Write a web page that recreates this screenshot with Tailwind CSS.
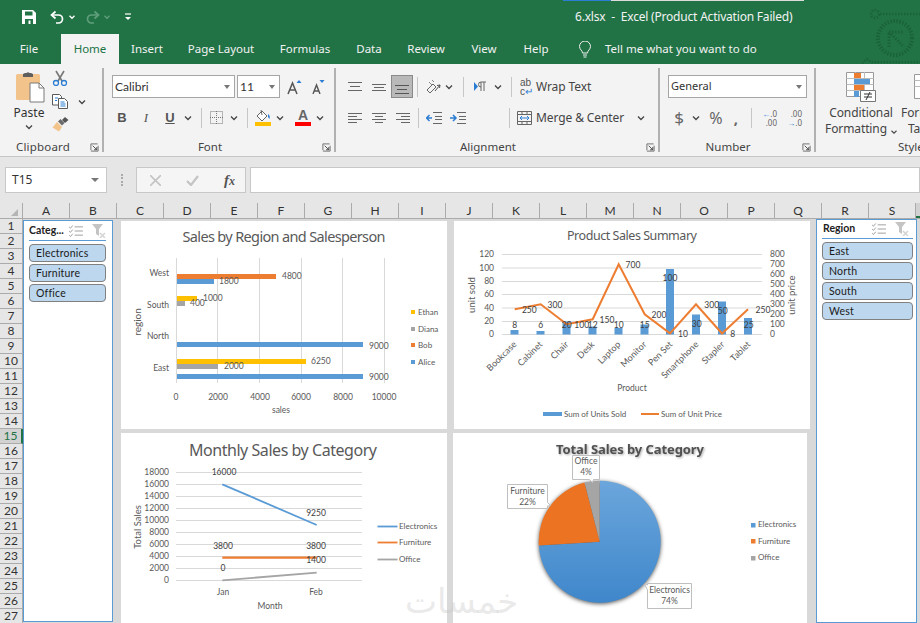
<!DOCTYPE html>
<html lang="en">
<head>
<meta charset="UTF-8">
<title>6.xlsx - Excel</title>
<script src="https://cdn.jsdelivr.net/npm/@tailwindcss/browser@4"></script>
</head>
<body class="bg-[#d9d9d9]">
<svg class="hidden">
  <symbol id="chev" viewBox="0 0 12 12"><path d="M3 4.500l3 3 3-3" fill="none" stroke="#444" stroke-width="1.300"/></symbol>
  <symbol id="launch" viewBox="0 0 10 10"><path d="M1 8V1h7.500M1 9h8V3" fill="none" stroke="#666"/><path d="M3 3l4.500 4.500M7.500 4.500v3h-3" fill="none" stroke="#444"/></symbol>
  <symbol id="multi" viewBox="0 0 15 13"><path d="M6 2h9M6 6.500h9M6 11h9" stroke="#999" fill="none"/><path d="M0 2l1.500 1.500L4 .5M0 6.500L1.500 8 4 5M0 11l1.500 1.500L4 9.500" stroke="#999" fill="none"/></symbol>
  <symbol id="clear" viewBox="0 0 14 14"><path d="M0 0h11L7 5v7l-3-2V5z" fill="#c4c4c4"/><path d="M8 9l5 5M13 9l-5 5" stroke="#d4d4d4" stroke-width="1.500"/></symbol>
</svg>

<div class="relative w-[920px] h-[623px] overflow-hidden flex flex-col font-['Noto_Sans',sans-serif]">

  <!-- title bar -->
  <div class="relative h-[34px] bg-[#217346] flex items-center text-white shrink-0">
    <div class="absolute top-0 left-[563px] w-[48px] h-px bg-[#2b7cd3]"></div>
    <div class="absolute top-0 left-[611px] w-[193px] h-px bg-[#dcdcdc]"></div>
    <svg class="ml-[22px] w-[14px] h-[14px]" viewBox="0 0 14 14"><path d="M0 0h11l3 3v11H0z" fill="#fff"/><path d="M3 1.500h7.500v4H3z" fill="#217346"/><path d="M3 9h8v5H3z" fill="#217346"/><path d="M6.500 10.500h2V14h-2z" fill="#fff"/></svg>
    <svg class="ml-[14px] w-[14px] h-[14px]" viewBox="0 0 14 14"><path d="M5.500 1.500L1.500 5l4 3.500" fill="none" stroke="#fff" stroke-width="1.700"/><path d="M2 5h6.500a4 4 0 0 1 0 8H6" fill="none" stroke="#fff" stroke-width="1.700"/></svg>
    <svg class="ml-[3px] w-[10px] h-[10px]" viewBox="0 0 12 12"><path d="M3 4.500l3 3 3-3" fill="none" stroke="#fff" stroke-width="1.500"/></svg>
    <svg class="ml-[9px] w-[14px] h-[14px] opacity-40" viewBox="0 0 14 14"><path d="M8.500 1.500l4 3.500-4 3.500" fill="none" stroke="#bfe0cc" stroke-width="1.700"/><path d="M12 5H5.500a4 4 0 0 0 0 8H8" fill="none" stroke="#bfe0cc" stroke-width="1.700"/></svg>
    <svg class="ml-[2px] w-[10px] h-[10px] opacity-40" viewBox="0 0 12 12"><path d="M3 4.500l3 3 3-3" fill="none" stroke="#bfe0cc" stroke-width="1.500"/></svg>
    <svg class="ml-[12px] w-[8px] h-[8px]" viewBox="0 0 8 8"><path d="M1 1h6" stroke="#fff" stroke-width="1.200"/><path d="M1 4h6L4 7z" fill="#fff"/></svg>
    <span class="absolute left-[575px] top-[8px] text-[12px] leading-[18px] tracking-[-0.2px] whitespace-pre text-[#f2f2f2]">6.xlsx  -  Excel (Product Activation Failed)</span>
    <svg class="absolute left-[862px] top-0 w-[58px] h-[64px]" viewBox="862 0 58 64" fill="none" stroke="#1a6239" stroke-width="2.500" stroke-dasharray="1.500 1.500">
      <circle cx="875" cy="14" r="4"/><path d="M880 14h40"/>
      <circle cx="895" cy="38" r="17" stroke-width="4"/>
      <path d="M889 47V32h14M889 32l15 15" stroke-width="3"/>
      <path d="M862 63l5-4 4 3h49"/>
    </svg>
  </div>

  <!-- tabs -->
  <div class="h-[30px] bg-[#217346] flex items-center text-[11.500px] text-[#f2f2f2] shrink-0">
    <div class="w-[58px] text-center">File</div>
    <div class="ml-[3px] w-[58px] h-full bg-[#f3f3f3] text-[#217346] flex items-center justify-center">Home</div>
    <div class="w-[56px] text-center">Insert</div>
    <div class="w-[92px] text-center">Page Layout</div>
    <div class="w-[76px] text-center">Formulas</div>
    <div class="w-[52px] text-center">Data</div>
    <div class="w-[62px] text-center">Review</div>
    <div class="w-[54px] text-center">View</div>
    <div class="w-[50px] text-center">Help</div>
    <svg class="ml-[17px] w-[14px] h-[17px]" viewBox="0 0 14 17" fill="none" stroke="#f2f2f2"><path d="M4.500 12c0-2.500-3-3.500-3-6.500a5.500 5.500 0 0 1 11 0c0 3-3 4-3 6.500z"/><path d="M5 14h4M5.500 16h3"/></svg>
    <span class="ml-[13px]">Tell me what you want to do</span>
  </div>

  <!-- ribbon -->
  <div class="h-[93px] bg-[#f3f3f3] border-b border-[#c6c6c6] flex text-[11.500px] text-[#444] shrink-0 overflow-hidden">

    <!-- Clipboard -->
    <div class="relative w-[104px] h-[84px] mt-[4px] border-r-2 border-[#b1b1b1] flex flex-col shrink-0">
      <div class="flex flex-1">
        <div class="w-[52px] flex flex-col items-center pt-[3px] pl-[8px]">
          <svg class="w-[30px] h-[32px]" viewBox="0 0 30 32"><rect x="1" y="3" width="24" height="26" rx="1.500" fill="#f2c38a"/><path d="M8 3l2-1h1.500a2 2 0 0 1 3 0H16l2 1v3H8z" fill="#5f5f5f"/><path d="M15 12h9l5 5v14H15z" fill="#fff" stroke="#7a7a7a"/><path d="M24 12v5h5" fill="none" stroke="#7a7a7a"/></svg>
          <span class="text-[12px] leading-[16px] text-[#333] mt-[2px] -ml-[2px]">Paste</span>
          <svg class="w-[12px] h-[12px] -ml-[2px]"><use href="#chev"/></svg>
        </div>
        <div class="flex flex-col pt-[2px] gap-[8px]">
          <svg class="w-[16px] h-[16px]" viewBox="0 0 16 16" fill="none"><path d="M4 1l6 10M12 1L6 11" stroke="#777" stroke-width="1.600"/><circle cx="4" cy="13" r="2.500" stroke="#2b7cd3" stroke-width="1.300"/><circle cx="12" cy="13" r="2.500" stroke="#2b7cd3" stroke-width="1.300"/></svg>
          <div class="flex items-center">
            <svg class="w-[16px] h-[15px]" viewBox="0 0 16 15" fill="#fff" stroke="#5a5a5a"><path d="M.5.500h7l2 2V11H.5z"/><path d="M6.500 4.500h6l3 3v7h-9z"/><path d="M3 4h3M3 6.500h2M8.500 8h4M8.500 10h5M8.500 12h5" stroke="#2b7cd3"/></svg>
            <svg class="ml-[8px] w-[12px] h-[12px]"><use href="#chev"/></svg>
          </div>
          <svg class="w-[17px] h-[15px]" viewBox="0 0 17 15"><path d="M5 5l5 5-3 4.500-6.500-4z" fill="#f2c38a"/><path d="M6 4.500l4 4 2.500-2.500-4-4z" fill="#6a6a6a"/><path d="M10 3l3-3 3.500 3-3.500 3z" fill="#555"/></svg>
        </div>
      </div>
      <div class="h-[16px] w-[86px] text-center leading-[22px] tracking-[0.2px]">Clipboard</div>
      <svg class="absolute right-[3px] bottom-0 w-[9px] h-[9px]"><use href="#launch"/></svg>
    </div>

    <!-- Font -->
    <div class="relative w-[232px] h-[84px] mt-[4px] border-r-2 border-[#b1b1b1] flex flex-col shrink-0">
      <div class="flex items-center mt-[7px] ml-[8px]">
        <div class="w-[123px] h-[23px] bg-white border border-[#a6a6a6] flex items-center pl-[2px] text-[12px] text-[#333] font-['Lato',sans-serif]">Calibri<span class="ml-auto mr-[4px] border-x-[3.500px] border-t-[4px] border-x-transparent border-t-[#777]"></span></div>
        <div class="ml-[2px] w-[43px] h-[23px] bg-white border border-[#a6a6a6] flex items-center pl-[2px] text-[12px] text-[#333] font-['Lato',sans-serif]">11<span class="ml-auto mr-[4px] border-x-[3.500px] border-t-[4px] border-x-transparent border-t-[#777]"></span></div>
        <svg class="ml-[7px] w-[15px] h-[16px]" viewBox="0 0 15 16"><path d="M1 15L5.500 4 10 15M2.800 11h5.400" fill="none" stroke="#555" stroke-width="1.500"/><path d="M9.500 4L12 1l2.500 3z" fill="#2b7cd3"/></svg>
        <svg class="ml-[10px] w-[13px] h-[15px]" viewBox="0 0 13 15"><path d="M1 15L4.500 6 8 15M2.300 12h4.400" fill="none" stroke="#555" stroke-width="1.400"/><path d="M7.500 1L10 4l2.500-3z" fill="#2b7cd3"/></svg>
      </div>
      <div class="flex items-center mt-[7px] ml-[6px] h-[25px] text-[13px] text-[#555]">
        <span class="w-[24px] text-center font-bold font-['Liberation_Sans',sans-serif]">B</span>
        <span class="w-[24px] text-center italic font-['Liberation_Serif',serif]">I</span>
        <span class="w-[24px] text-center font-bold underline font-['Liberation_Sans',sans-serif]">U</span>
        <svg class="w-[12px] h-[12px]"><use href="#chev"/></svg>
        <span class="ml-[7px] w-px h-[20px] bg-[#c6c6c6]"></span>
        <svg class="ml-[8px] w-[13px] h-[13px]" viewBox="0 0 13 13" fill="none" stroke="#777" stroke-dasharray="1 1"><path d="M.5.500h12v12H.5zM6.500 0v13M0 6.500h13"/></svg>
        <svg class="ml-[5px] w-[12px] h-[12px]"><use href="#chev"/></svg>
        <span class="ml-[7px] w-px h-[20px] bg-[#c6c6c6]"></span>
        <div class="ml-[7px] flex flex-col items-center w-[16px]">
          <svg class="w-[16px] h-[13px]" viewBox="0 0 16 13"><path d="M2 7l5-5 5 5-5 5z" fill="#fff" stroke="#666"/><path d="M6 1l1 5" stroke="#666"/><path d="M13 5c2 1 2 3 1.500 5l-1.500-2z" fill="#2b7cd3"/></svg>
          <span class="w-[16px] h-[4px] bg-[#ffc000]"></span>
        </div>
        <svg class="ml-[3px] w-[12px] h-[12px]"><use href="#chev"/></svg>
        <div class="ml-[9px] flex flex-col items-center w-[16px]">
          <span class="text-[14px] leading-[13px] text-[#666] font-bold font-['Liberation_Sans',sans-serif]">A</span>
          <span class="w-[16px] h-[4px] bg-[#ff0000]"></span>
        </div>
        <svg class="ml-[3px] w-[12px] h-[12px]"><use href="#chev"/></svg>
      </div>
      <div class="mt-auto h-[16px] text-center leading-[22px] pr-[18px]">Font</div>
      <svg class="absolute right-[3px] bottom-0 w-[9px] h-[9px]"><use href="#launch"/></svg>
    </div>

    <!-- Alignment -->
    <div class="relative w-[324px] h-[84px] mt-[4px] border-r-2 border-[#b1b1b1] flex flex-col shrink-0">
      <div class="flex items-center mt-[7px] h-[23px]">
        <svg class="ml-[12px] w-[14px] h-[10px]" viewBox="0 0 14 10" stroke="#666"><path d="M0 .500h14M2 4.500h10M0 8.500h14"/></svg>
        <svg class="ml-[10px] w-[14px] h-[10px]" viewBox="0 0 14 10" stroke="#666"><path d="M0 2.500h14M2 5.500h10M0 8.500h14"/></svg>
        <div class="ml-[5px] w-[22px] h-[23px] bg-[#b9b9b9] border border-[#8a8a8a] flex items-end justify-center pb-[3px]">
          <svg class="w-[14px] h-[9px]" viewBox="0 0 14 9" stroke="#555"><path d="M0 .500h14M2 4.500h10M0 8.500h14"/></svg>
        </div>
        <span class="ml-[4px] w-px h-[20px] bg-[#c6c6c6]"></span>
        <svg class="ml-[8px] w-[16px] h-[15px]" viewBox="0 0 16 15" fill="none" stroke="#666"><path d="M1 11l6-6 3 3-6 6z"/><path d="M9 12l5-6M14 6l-3 .500M14 6l-.500 3" stroke="#555"/><path d="M3 3l3 3M6 1l2 2" stroke="#888"/></svg>
        <svg class="ml-[1px] w-[12px] h-[12px]"><use href="#chev"/></svg>
        <span class="ml-[8px] w-px h-[20px] bg-[#c6c6c6]"></span>
        <svg class="ml-[10px] w-[13px] h-[11px]" viewBox="0 0 13 11"><path d="M0 1l4 4.500L0 10z" fill="#2b7cd3"/><path d="M7 10V1h5M10 1v9M7 1a2.500 2.500 0 0 0 0 5" fill="none" stroke="#666"/></svg>
        <svg class="ml-[5px] w-[12px] h-[12px]"><use href="#chev"/></svg>
        <span class="ml-[7px] w-px h-[20px] bg-[#c6c6c6]"></span>
        <span class="ml-[8px] w-[13px] text-[10px] leading-[9px] text-[#555] font-['Liberation_Sans',sans-serif]">ab<br>c<span class="text-[#2b7cd3]">↵</span></span>
        <span class="ml-[3px] text-[12px] tracking-[-0.1px]">Wrap Text</span>
      </div>
      <div class="flex items-center mt-[7px] h-[25px]">
        <svg class="ml-[12px] w-[14px] h-[10px]" viewBox="0 0 14 10" stroke="#666"><path d="M0 .500h14M0 3.500h9M0 6.500h14M0 9.500h9"/></svg>
        <svg class="ml-[10px] w-[14px] h-[10px]" viewBox="0 0 14 10" stroke="#666"><path d="M0 .500h14M3 3.500h8M0 6.500h14M3 9.500h8"/></svg>
        <svg class="ml-[10px] w-[14px] h-[10px]" viewBox="0 0 14 10" stroke="#666"><path d="M0 .500h14M5 3.500h9M0 6.500h14M5 9.500h9"/></svg>
        <span class="ml-[8px] w-px h-[20px] bg-[#c6c6c6]"></span>
        <svg class="ml-[7px] w-[16px] h-[12px]" viewBox="0 0 16 12" fill="none"><path d="M7 .500h9M9 4.500h7M9 7.500h7M7 11.500h9" stroke="#666"/><path d="M6 6H1M3.500 3L.500 6l3 3" stroke="#2b7cd3" stroke-width="1.500"/></svg>
        <svg class="ml-[8px] w-[16px] h-[12px]" viewBox="0 0 16 12" fill="none"><path d="M7 .500h9M9 4.500h7M9 7.500h7M7 11.500h9" stroke="#666"/><path d="M0 6h5M3 3l3 3-3 3" stroke="#2b7cd3" stroke-width="1.500"/></svg>
        <span class="ml-[43px] w-px h-[20px] bg-[#c6c6c6]"></span>
        <svg class="ml-[7px] w-[15px] h-[14px]" viewBox="0 0 15 14" fill="none"><path d="M.5.500h14v13H.5zM.5 3.500h14M.5 10.500h14M5 .500v3M10 .500v3M5 10.500v3M10 10.500v3" stroke="#666"/><path d="M3 7h9M5 5L3 7l2 2M10 5l2 2-2 2" stroke="#2b7cd3"/></svg>
        <span class="ml-[4px] text-[12px] tracking-[-0.1px]">Merge &amp; Center</span>
        <svg class="ml-[11px] w-[12px] h-[12px]"><use href="#chev"/></svg>
      </div>
      <div class="mt-auto h-[16px] text-center leading-[22px] pr-[18px]">Alignment</div>
      <svg class="absolute right-[3px] bottom-0 w-[9px] h-[9px]"><use href="#launch"/></svg>
    </div>

    <!-- Number -->
    <div class="relative w-[156px] h-[84px] mt-[4px] border-r-2 border-[#b1b1b1] flex flex-col shrink-0">
      <div class="mt-[7px] ml-[8px] w-[139px] h-[23px] bg-white border border-[#a6a6a6] flex items-center pl-[2px] text-[11px] text-[#333]">General<span class="ml-auto mr-[4px] border-x-[3.500px] border-t-[4px] border-x-transparent border-t-[#777]"></span></div>
      <div class="flex items-center mt-[7px] h-[25px] text-[#666]">
        <span class="ml-[13px] w-[12px] text-center text-[17px]">$</span>
        <svg class="ml-[5px] w-[12px] h-[12px]"><use href="#chev"/></svg>
        <span class="ml-[6px] w-[16px] text-center text-[16px]">%</span>
        <span class="ml-[6px] w-[12px] text-center text-[15px] font-bold leading-[14px]">,</span>
        <span class="ml-[9px] w-px h-[20px] bg-[#c6c6c6]"></span>
        <div class="ml-[9px] w-[16px] text-[8px] leading-[9px] flex flex-col items-end"><span><span class="text-[#2b7cd3]">←</span>.0</span><span>.00</span></div>
        <div class="ml-[9px] w-[16px] text-[8px] leading-[9px] flex flex-col items-end"><span>.00</span><span><span class="text-[#2b7cd3]">→</span>.0</span></div>
      </div>
      <div class="mt-auto h-[16px] text-center leading-[22px] pr-[18px]">Number</div>
      <svg class="absolute right-[3px] bottom-0 w-[9px] h-[9px]"><use href="#launch"/></svg>
    </div>

    <!-- Styles, cut off by the window -->
    <div class="relative w-[200px] h-[84px] mt-[4px] flex shrink-0">
      <div class="w-[90px] flex flex-col items-center pt-[4px]">
        <svg class="w-[30px] h-[30px]" viewBox="0 0 30 30"><path d="M.5.500h27v24H.5z" fill="#fff" stroke="#999"/><path d="M.5 6.500h27M.5 12.500h27M.5 18.500h27M9.500 0v25M18.500 0v25" stroke="#bbb"/><path d="M8 1h7v5H8zM8 13h10v5H8z" fill="#ed7d31"/><path d="M8 7h16v5H8zM8 19h5v6H8z" fill="#5b9bd5"/><path d="M14.500 18.500h15v11h-15z" fill="#fff" stroke="#777"/><path d="M18 22h8M18 25h8M24 20l-4 8" stroke="#333" fill="none"/></svg>
        <span class="mt-[3px] text-[12px] leading-[16px] tracking-[-0.1px]">Conditional</span>
        <span class="text-[12px] leading-[16px] tracking-[-0.1px] whitespace-nowrap">Formatting <span class="inline-block w-[7px] h-[6px] align-middle"><svg class="w-[10px] h-[10px] -ml-[1px]"><use href="#chev"/></svg></span></span>
      </div>
      <div class="flex flex-col items-start pt-[4px] -ml-[5px]">
        <svg class="ml-[13px] w-[30px] h-[30px]" viewBox="0 0 30 30"><path d="M.5 2.500h27v24H.5z" fill="#fff" stroke="#999"/><path d="M.5 8.500h27M.5 14.500h27" stroke="#bbb"/></svg>
        <span class="mt-[3px] text-[12px] leading-[16px] tracking-[-0.1px]">Format as</span>
        <span class="ml-[7px] text-[12px] leading-[16px] tracking-[-0.1px]">Table</span>
      </div>
      <div class="absolute left-[82px] bottom-0 h-[16px] leading-[22px]">Styles</div>
    </div>
  </div>

  <!-- formula bar -->
  <div class="h-[46px] bg-[#e6e6e6] flex items-start pt-[10px] shrink-0">
    <div class="ml-[5px] w-[102px] h-[26px] bg-white border border-[#c8c8c8] flex items-center pl-[6px] text-[12px] text-[#333]">T15<span class="ml-auto mr-[7px] border-x-[4px] border-t-[4px] border-x-transparent border-t-[#777]"></span></div>
    <div class="ml-[14px] w-[3px] h-[12px] mt-[7px] border-l-2 border-dotted border-[#aaa]"></div>
    <div class="ml-[12px] w-[110px] h-[26px] bg-[#f5f5f5] border border-[#c8c8c8] flex items-center">
      <svg class="ml-[13px] w-[11px] h-[11px]" viewBox="0 0 11 11" stroke="#c4c4c4" stroke-width="1.600"><path d="M0 0l11 11M11 0L0 11"/></svg>
      <svg class="ml-[25px] w-[13px] h-[11px]" viewBox="0 0 13 11" fill="none" stroke="#c4c4c4" stroke-width="2.200"><path d="M1 6l4 4 7-9"/></svg>
      <span class="ml-[25px] text-[15px] italic text-[#555] font-['Liberation_Serif',serif] font-bold">f<span class="text-[12px]">x</span></span>
    </div>
    <div class="ml-[4px] flex-1 h-[26px] bg-white border border-[#c8c8c8]"></div>
  </div>

  <!-- column headers -->
  <div id="cols" class="h-[16px] flex bg-[#e6e6e6] border-b border-[#ababab] text-[12px] text-[#333] shrink-0 font-['Lato',sans-serif]">
    <div class="w-[23px] relative border-r border-[#ababab] shrink-0"><span class="absolute right-[4px] bottom-[2px] border-l-[7px] border-b-[7px] border-l-transparent border-b-[#b5b5b5]"></span></div>
  </div>

  <div class="flex flex-1 min-h-0">
    <div id="rows" class="w-[23px] shrink-0 bg-[#e6e6e6] text-[12px] text-[#333] font-['Lato',sans-serif] overflow-hidden"></div>

    <div class="relative flex-1 bg-[#d9d9d9]">

      <!-- Category slicer -->
      <div class="absolute left-0 top-[1px] bottom-[1px] w-[90px] bg-white border border-[#5b9bd5] pl-[5px] pr-[6px] font-['Lato',sans-serif]">
        <div class="flex items-center h-[20px] border-b border-[#5b9bd5] mb-[3px] text-[10.500px] font-bold text-[#222]">
          Categ...
          <svg class="ml-auto w-[14px] h-[12px]"><use href="#multi"/></svg>
          <svg class="ml-[9px] w-[14px] h-[14px]"><use href="#clear"/></svg>
        </div>
        <div class="flex flex-col gap-[2px] text-[10.500px] text-[#1a1a1a]">
          <div class="h-[18px] bg-[#bdd7ee] border border-[#808080] rounded-[4px] pl-[6px] leading-[16px] tracking-[0.2px]">Electronics</div>
          <div class="h-[18px] bg-[#bdd7ee] border border-[#808080] rounded-[4px] pl-[6px] leading-[16px] tracking-[0.2px]">Furniture</div>
          <div class="h-[18px] bg-[#bdd7ee] border border-[#808080] rounded-[4px] pl-[6px] leading-[16px] tracking-[0.2px]">Office</div>
        </div>
      </div>

      <!-- Region slicer -->
      <div class="absolute left-[793px] top-[0px] bottom-0 w-[101px] bg-white border border-[#5b9bd5] pl-[5px] pr-[3px] font-['Lato',sans-serif]">
        <div class="flex items-center h-[19px] border-b border-[#5b9bd5] mb-[3px] text-[10.500px] font-bold text-[#222]">
          <span class="ml-[1px]">Region</span>
          <svg class="ml-auto w-[14px] h-[12px]"><use href="#multi"/></svg>
          <svg class="ml-[9px] mr-[4px] w-[14px] h-[14px]"><use href="#clear"/></svg>
        </div>
        <div class="flex flex-col gap-[2px] text-[10.500px] text-[#1a1a1a]">
          <div class="h-[18px] bg-[#bdd7ee] border border-[#808080] rounded-[4px] pl-[6px] leading-[16px] tracking-[0.2px]">East</div>
          <div class="h-[18px] bg-[#bdd7ee] border border-[#808080] rounded-[4px] pl-[6px] leading-[16px] tracking-[0.2px]">North</div>
          <div class="h-[18px] bg-[#bdd7ee] border border-[#808080] rounded-[4px] pl-[6px] leading-[16px] tracking-[0.2px]">South</div>
          <div class="h-[18px] bg-[#bdd7ee] border border-[#808080] rounded-[4px] pl-[6px] leading-[16px] tracking-[0.2px]">West</div>
        </div>
      </div>

      <!-- Sales by Region and Salesperson -->
      <svg class="absolute left-[98px] top-[2px] bg-white font-['Lato',sans-serif]" width="326" height="208" viewBox="121 221 326 208" font-size="8.500" fill="#595959">
        <text x="284" y="242" text-anchor="middle" font-size="14.500" class="font-['Noto_Sans',sans-serif]" textLength="203">Sales by Region and Salesperson</text>
        <g stroke="#d9d9d9"><path d="M176.500 258v125M217.500 258v125M259.500 258v125M301.500 258v125M342.500 258v125M384.500 258v125"/></g>
        <rect x="177" y="274" width="99" height="5" fill="#ed7d31"/><rect x="177" y="279" width="37" height="5" fill="#5b9bd5"/>
        <rect x="177" y="296" width="20" height="5" fill="#ffc000"/><rect x="177" y="301" width="8" height="5" fill="#a5a5a5"/>
        <rect x="177" y="342" width="186" height="5" fill="#5b9bd5"/>
        <rect x="177" y="359" width="129" height="5" fill="#ffc000"/><rect x="177" y="364" width="41" height="5" fill="#a5a5a5"/><rect x="177" y="374" width="186" height="5" fill="#5b9bd5"/>
        <text x="282" y="279">4800</text><text x="219" y="284">1800</text><text x="203" y="301">1000</text><text x="190" y="306">400</text>
        <text x="369" y="349">9000</text><text x="311" y="364">6250</text><text x="224" y="369">2000</text><text x="369" y="380">9000</text>
        <g text-anchor="end"><text x="169" y="276">West</text><text x="169" y="308">South</text><text x="169" y="339">North</text><text x="169" y="371">East</text></g>
        <g text-anchor="middle"><text x="176" y="400">0</text><text x="218" y="400">2000</text><text x="260" y="400">4000</text><text x="301" y="400">6000</text><text x="343" y="400">8000</text><text x="384" y="400">10000</text><text x="281" y="413">sales</text>
          <text transform="translate(141 322) rotate(-90)" font-size="10">region</text></g>
        <rect x="411" y="310" width="4" height="4" fill="#ffc000"/><rect x="411" y="327" width="4" height="4" fill="#a5a5a5"/><rect x="411" y="343" width="4" height="4" fill="#ed7d31"/><rect x="411" y="360" width="4" height="4" fill="#5b9bd5"/>
        <g font-size="8"><text x="418" y="315">Ethan</text><text x="418" y="332">Diana</text><text x="418" y="348">Bob</text><text x="418" y="365">Alice</text></g>
      </svg>

      <!-- Product Sales Summary -->
      <svg class="absolute left-[431px] top-[2px] bg-white font-['Lato',sans-serif]" width="356" height="208" viewBox="454 221 356 208" font-size="8.500" fill="#595959">
        <text x="632" y="240" text-anchor="middle" font-size="12.500" class="font-['Noto_Sans',sans-serif]" textLength="130">Product Sales Summary</text>
        <g stroke="#d9d9d9"><path d="M502 254.500h260M502 268h260M502 281.500h260M502 294.500h260M502 308h260M502 321.500h260M502 334.500h260"/></g>
        <g text-anchor="end"><text x="494" y="257">120</text><text x="494" y="271">100</text><text x="494" y="284">80</text><text x="494" y="297">60</text><text x="494" y="311">40</text><text x="494" y="324">20</text><text x="494" y="337">0</text></g>
        <g><text x="770" y="257">800</text><text x="770" y="267">700</text><text x="770" y="277">600</text><text x="770" y="287">500</text><text x="770" y="297">400</text><text x="770" y="307">300</text><text x="770" y="317">200</text><text x="770" y="327">100</text><text x="770" y="337">0</text></g>
        <g fill="#5b9bd5">
          <rect x="510.500" y="330" width="8" height="4.500"/><rect x="536.500" y="331" width="8" height="3.500"/><rect x="562.500" y="321.500" width="8" height="13"/><rect x="588.500" y="326.500" width="8" height="8"/><rect x="614.500" y="328" width="8" height="6.500"/><rect x="640.500" y="324.500" width="8" height="10"/><rect x="666" y="269" width="8" height="65.500"/><rect x="692" y="314.500" width="8" height="20"/><rect x="718" y="301.500" width="8" height="33"/><rect x="744" y="318" width="8" height="16.500"/>
        </g>
        <polyline points="514.700,309.300 540.700,304.300 566.700,324.300 592.700,319.300 618.700,264.300 644.700,314.300 670,333.300 696,304.300 722,333.500 748,309.300" fill="none" stroke="#ed7d31" stroke-width="2"/>
        <g text-anchor="middle" fill="#404040">
          <text x="514.700" y="328">8</text><text x="540.700" y="328">6</text><text x="566.700" y="328">20</text><text x="592.700" y="328">12</text><text x="618.700" y="328">10</text><text x="644.700" y="328">15</text><text x="670" y="281">100</text><text x="696.700" y="327">30</text><text x="722.700" y="314">50</text><text x="732.700" y="337">8</text><text x="748.700" y="328">25</text>
          <text x="529.300" y="313">250</text><text x="555" y="308">300</text><text x="581.700" y="328">100</text><text x="607" y="323">150</text><text x="633" y="268">700</text><text x="659" y="318">200</text><text x="683" y="337">10</text><text x="711.700" y="308">300</text><text x="763" y="313">250</text>
        </g>
        <g text-anchor="end" font-size="9">
          <text transform="translate(517 345) rotate(-45)">Bookcase</text><text transform="translate(543 345) rotate(-45)">Cabinet</text><text transform="translate(569 345) rotate(-45)">Chair</text><text transform="translate(595 345) rotate(-45)">Desk</text><text transform="translate(621 345) rotate(-45)">Laptop</text><text transform="translate(647 345) rotate(-45)">Monitor</text><text transform="translate(673 345) rotate(-45)">Pen Set</text><text transform="translate(699 345) rotate(-45)">Smartphone</text><text transform="translate(725 345) rotate(-45)">Stapler</text><text transform="translate(751 345) rotate(-45)">Tablet</text>
        </g>
        <g text-anchor="middle"><text x="632" y="391">Product</text><text transform="translate(475 295) rotate(-90)" font-size="9.500">unit sold</text><text transform="translate(795 295) rotate(-90)" font-size="9.500">unit price</text></g>
        <rect x="543" y="412" width="19" height="4" fill="#5b9bd5"/><path d="M641 414h18" stroke="#ed7d31" stroke-width="2"/>
        <g font-size="8"><text x="564" y="417">Sum of Units Sold</text><text x="661" y="417">Sum of Unit Price</text></g>
      </svg>

      <!-- Monthly Sales by Category -->
      <svg class="absolute left-[98px] top-[214px] bg-white font-['Lato',sans-serif]" width="326" height="190" viewBox="121 433 326 190" font-size="8.500" fill="#595959">
        <text x="283" y="456" text-anchor="middle" font-size="16" class="font-['Noto_Sans',sans-serif]" textLength="188">Monthly Sales by Category</text>
        <g stroke="#d9d9d9"><path d="M176 472.500h186M176 484.500h186M176 496.500h186M176 508.500h186M176 520.500h186M176 532.500h186M176 544.500h186M176 556.500h186M176 568.500h186M176 580.500h186"/></g>
        <g text-anchor="end"><text x="169" y="475">18000</text><text x="169" y="487">16000</text><text x="169" y="499">14000</text><text x="169" y="511">12000</text><text x="169" y="523">10000</text><text x="169" y="535">8000</text><text x="169" y="547">6000</text><text x="169" y="559">4000</text><text x="169" y="571">2000</text><text x="169" y="583">0</text></g>
        <path d="M222.300 484.300L316.700 525" stroke="#5b9bd5" stroke-width="1.800"/><path d="M222.300 557.700h94.400" stroke="#ed7d31" stroke-width="2.200"/><path d="M222.300 580.300l94.400-7.600" stroke="#a5a5a5" stroke-width="1.800"/>
        <g text-anchor="middle" fill="#404040"><text x="224" y="475">16000</text><text x="316" y="516">9250</text><text x="223" y="549">3800</text><text x="316" y="549">3800</text><text x="316" y="563">1400</text><text x="223" y="571">0</text></g>
        <g text-anchor="middle"><text x="223" y="595">Jan</text><text x="316" y="595">Feb</text><text x="270" y="609">Month</text><text transform="translate(141 527) rotate(-90)" font-size="9.500">Total Sales</text></g>
        <path d="M377.500 526.500h20" stroke="#5b9bd5" stroke-width="1.800"/><path d="M377.500 542.500h20" stroke="#ed7d31" stroke-width="1.800"/><path d="M377.500 559.500h20" stroke="#a5a5a5" stroke-width="1.800"/>
        <g font-size="8"><text x="399" y="529">Electronics</text><text x="399" y="545">Furniture</text><text x="399" y="562">Office</text></g>
      </svg>

      <!-- Total Sales by Category -->
      <svg class="absolute left-[430px] top-[214px] bg-white font-['Lato',sans-serif]" width="354" height="190" viewBox="453 433 354 190" font-size="8.500" fill="#595959">
        <defs><linearGradient id="blue" x1="0" y1="0" x2="0" y2="1"><stop offset="0" stop-color="#6ba6dc"/><stop offset="1" stop-color="#3f87cb"/></linearGradient></defs>
        <text x="630" y="454" text-anchor="middle" font-size="13" font-weight="700" class="font-['Noto_Sans',sans-serif] drop-shadow-[1px_1px_1px_#aaa]" fill="#505050" textLength="148">Total Sales by Category</text>
        <g class="drop-shadow-[0_1px_2px_#555]">
          <path d="M599.700 541.700V480.700A61 61 0 1 1 538.800 545.500z" fill="url(#blue)"/>
          <path d="M599.700 541.700L538.800 545.500A61 61 0 0 1 584.500 482.600z" fill="#eb7321"/>
          <path d="M599.700 541.700L584.500 482.600A61 61 0 0 1 599.700 480.700z" fill="#a5a5a5"/>
        </g>
        <g fill="#fff" stroke="#bfbfbf">
          <path d="M572.500 455.500h27v24h-6l-1 3-3-3h-17z"/>
          <path d="M507.500 484.500h40v18l3 3-3 .500v2.500h-40z"/>
          <path d="M647.500 590l-3-6 3 1v-1.500h44v25h-44z"/>
        </g>
        <g text-anchor="middle"><text x="586" y="464">Office</text><text x="586" y="475">4%</text><text x="527.500" y="494">Furniture</text><text x="527.500" y="505">22%</text><text x="669.500" y="593">Electronics</text><text x="669.500" y="604">74%</text></g>
        <rect x="751" y="523" width="4.500" height="4.500" fill="#5b9bd5"/><rect x="751" y="539" width="4.500" height="4.500" fill="#ed7d31"/><rect x="751" y="556" width="4.500" height="4.500" fill="#a5a5a5"/>
        <g font-size="8"><text x="758" y="527">Electronics</text><text x="758" y="544">Furniture</text><text x="758" y="560">Office</text></g>
      </svg>

      <!-- watermark -->
      <div dir="rtl" class="absolute left-[382px] top-[360px] text-[34px] leading-[44px] text-[#c8c8c8]/40 font-['DejaVu_Sans',sans-serif]">خمسات</div>
    </div>
  </div>
</div>

<script>
// sheet headers
const cols = document.getElementById("cols");
"ABCDEFGHIJKLMNOPQRS".split("").forEach(c => {
  cols.innerHTML += `<div class="w-[47px] shrink-0 text-center leading-[15px] border-r border-[#ababab]">${c}</div>`;
});
cols.innerHTML += `<div class="flex-1 bg-[#d2d2d2] border-b-2 border-[#217346]"></div>`;

const rows = document.getElementById("rows");
for (let i = 1; i <= 27; i++) {
  rows.innerHTML += i === 15
    ? `<div class="h-[15px] text-center leading-[14px] bg-[#d2d2d2] text-[#217346] border-b border-[#ababab] border-r-2 border-r-[#217346]">${i}</div>`
    : `<div class="h-[15px] text-center leading-[14px] border-b border-[#ababab] border-r border-r-[#ababab]">${i}</div>`;
}
</script>
</body>
</html>
